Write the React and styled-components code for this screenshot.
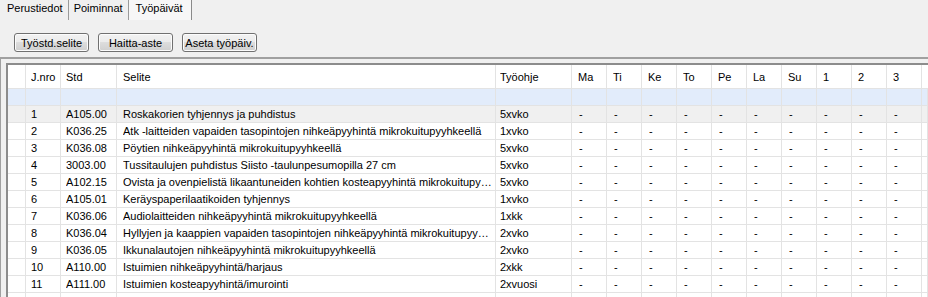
import React from "react";
import styled, { createGlobalStyle } from "styled-components";

const GlobalStyle = createGlobalStyle`
  html, body {
    margin: 0;
    padding: 0;
    background: #f0f0f0;
  }
  body {
    font-family: "Liberation Sans", Arial, sans-serif;
    font-size: 11px;
    color: #000;
    overflow: hidden;
  }
`;

const tabs = ["Perustiedot", "Poiminnat", "Työpäivät"];
const buttons = ["Työstd.selite", "Haitta-aste", "Aseta työpäiv."];
const days = ["Ma", "Ti", "Ke", "To", "Pe", "La", "Su", "1", "2", "3"];

const rows = [
  ["1", "A105.00", "Roskakorien tyhjennys ja puhdistus", "5xvko"],
  ["2", "K036.25", "Atk -laitteiden vapaiden tasopintojen nihkeäpyyhintä mikrokuitupyyhkeellä", "1xvko"],
  ["3", "K036.08", "Pöytien nihkeäpyyhintä mikrokuitupyyhkeellä", "5xvko"],
  ["4", "3003.00", "Tussitaulujen puhdistus Siisto -taulunpesumopilla 27 cm", "5xvko"],
  ["5", "A102.15", "Ovista ja ovenpielistä likaantuneiden kohtien kosteapyyhintä mikrokuitupyyhkeellä", "5xvko"],
  ["6", "A105.01", "Keräyspaperilaatikoiden tyhjennys", "1xvko"],
  ["7", "K036.06", "Audiolaitteiden nihkeäpyyhintä mikrokuitupyyhkeellä", "1xkk"],
  ["8", "K036.04", "Hyllyjen ja kaappien vapaiden tasopintojen nihkeäpyyhintä mikrokuitupyyhkeellä", "2xvko"],
  ["9", "K036.05", "Ikkunalautojen nihkeäpyyhintä mikrokuitupyyhkeellä", "2xvko"],
  ["10", "A110.00", "Istuimien nihkeäpyyhintä/harjaus", "2xkk"],
  ["11", "A111.00", "Istuimien kosteapyyhintä/imurointi", "2xvuosi"],
];

const columns = "18px 35px 56px 379px 76px repeat(10, 35px) 1fr";

const Page = styled.div`
  width: 928px;
  height: 297px;
  display: flex;
  flex-direction: column;
  overflow: hidden;
`;

const TabStrip = styled.div`
  display: flex;
  height: 20px;
  padding-left: 2px;
`;

const Tab = styled.div`
  height: 20px;
  padding: 0 ${(p) => (p.$active ? "8px" : "5px")} 4px ${(p) => (p.$active ? "7px" : "5px")};
  display: flex;
  align-items: center;
  box-sizing: border-box;
  border-right: 1px solid ${(p) => (p.$active ? "#8a8a8a" : "#9a9a9a")};
  background: ${(p) => (p.$active ? "#f7f7f7" : "transparent")};
  white-space: nowrap;
`;

const ButtonBar = styled.div`
  display: flex;
  gap: 9px;
  padding: 13px 0 0 14px;
`;

const Button = styled.button`
  width: 75px;
  height: 19px;
  padding: 0;
  font-family: inherit;
  font-size: 11px;
  color: #000;
  border: 1px solid #707070;
  border-radius: 3px;
  background: linear-gradient(#f2f2f2, #ebebeb 50%, #dddddd 50%, #cfcfcf);
  box-shadow: inset 0 0 0 1px #fcfcfc;
`;

const Frame = styled.div`
  margin-top: 5px;
  flex: 1;
  border-top: 2px solid #a0a0a0;
  border-left: 1px solid #a0a0a0;
  padding: 4px 0 0 5px;
  display: flex;
`;

const Grid = styled.div`
  flex: 1;
  background: #fff;
  border-top: 2px solid #8c8c8c;
  border-left: 2px solid #8c8c8c;
  overflow: hidden;
`;

const Row = styled.div`
  display: grid;
  grid-template-columns: ${columns};
  height: ${(p) => (p.$header ? "24px" : "17px")};
  background: ${(p) => p.$bg || "#fff"};
  box-sizing: border-box;
  border-bottom: 1px solid #e3e3e3;
`;

const Cell = styled.div`
  display: flex;
  align-items: center;
  padding-left: ${(p) => p.$pad || 5}px;
  border-right: 1px solid #e3e3e3;
  white-space: nowrap;
  overflow: hidden;
  min-width: 0;

  span {
    overflow: hidden;
    text-overflow: ellipsis;
    padding-right: 2px;
  }
`;

const pads = [0, 5, 5, 6, 4];

const App = () => (
  <>
    <GlobalStyle />
    <Page>
      <TabStrip>
        {tabs.map((t, i) => (
          <Tab key={t} $active={i === 2}>
            {t}
          </Tab>
        ))}
      </TabStrip>
      <ButtonBar>
        {buttons.map((b) => (
          <Button key={b}>{b}</Button>
        ))}
      </ButtonBar>
      <Frame>
        <Grid>
          <Row $header>
            {["", "J.nro", "Std", "Selite", "Työohje", ...days, ""].map((h, i) => (
              <Cell key={i} $pad={pads[i] ?? 6}>
                <span>{h}</span>
              </Cell>
            ))}
          </Row>
          <Row $bg="#e2ecfb">
            {Array.from({ length: 16 }).map((_, i) => (
              <Cell key={i} />
            ))}
          </Row>
          {rows.map((r, ri) => (
            <Row key={r[0]} $bg={ri === 0 ? "#f0f0f0" : "#fff"}>
              <Cell $pad={0} />
              {r.map((v, i) => (
                <Cell key={i} $pad={pads[i + 1]}>
                  <span>{v}</span>
                </Cell>
              ))}
              {days.map((d) => (
                <Cell key={d} $pad={7}>
                  <span>-</span>
                </Cell>
              ))}
              <Cell />
            </Row>
          ))}
          <Row>
            {Array.from({ length: 16 }).map((_, i) => (
              <Cell key={i} />
            ))}
          </Row>
        </Grid>
      </Frame>
    </Page>
  </>
);

export default App;
